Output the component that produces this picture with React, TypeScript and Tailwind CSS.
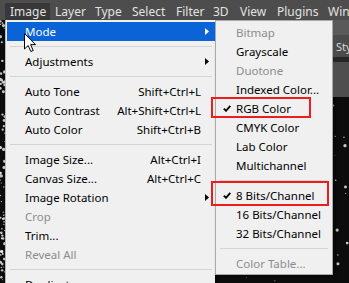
import React from 'react';

const BAR = [
  { label: 'Image', w: 'w-[45px]', active: true },
  { label: 'Layer', w: 'w-[40px]' },
  { label: 'Type', w: 'w-[37px]' },
  { label: 'Select', w: 'w-[44px]' },
  { label: 'Filter', w: 'w-[37px]' },
  { label: '3D', w: 'w-[27px]' },
  { label: 'View', w: 'w-[37px]' },
  { label: 'Plugins', w: 'w-[51px]' },
  { label: 'Window', w: 'w-[50px]' },
];

type Item =
  | { sep: true }
  | { sep?: false; label: string; shortcut?: string; sub?: boolean; off?: boolean; hot?: boolean; check?: boolean };

const MAIN: Item[] = [
  { label: 'Mode', sub: true, hot: true },
  { sep: true },
  { label: 'Adjustments', sub: true },
  { sep: true },
  { label: 'Auto Tone', shortcut: 'Shift+Ctrl+L' },
  { label: 'Auto Contrast', shortcut: 'Alt+Shift+Ctrl+L' },
  { label: 'Auto Color', shortcut: 'Shift+Ctrl+B' },
  { sep: true },
  { label: 'Image Size...', shortcut: 'Alt+Ctrl+I' },
  { label: 'Canvas Size...', shortcut: 'Alt+Ctrl+C' },
  { label: 'Image Rotation', sub: true },
  { label: 'Crop', off: true },
  { label: 'Trim...' },
  { label: 'Reveal All', off: true },
  { sep: true },
  { label: 'Duplicate...' },
];

const MODE: Item[] = [
  { label: 'Bitmap', off: true },
  { label: 'Grayscale' },
  { label: 'Duotone', off: true },
  { label: 'Indexed Color...' },
  { label: 'RGB Color', check: true },
  { label: 'CMYK Color' },
  { label: 'Lab Color' },
  { label: 'Multichannel' },
  { sep: true },
  { label: '8 Bits/Channel', check: true },
  { label: '16 Bits/Channel' },
  { label: '32 Bits/Channel' },
  { sep: true },
  { label: 'Color Table...', off: true },
];

function Arrow({ white }: { white?: boolean }) {
  return (
    <svg width="4" height="7" viewBox="0 0 4 7" className="shrink-0">
      <path d="M0 0 L4 3.5 L0 7 Z" fill={white ? '#ffffff' : '#000000'} />
    </svg>
  );
}

function Check() {
  return (
    <svg width="8" height="7" viewBox="0 0 8 7" className="absolute left-[6px] top-[6px]">
      <path d="M0.8 3.6 L3 5.8 L7.3 0.9" fill="none" stroke="#000" strokeWidth="1.8" />
    </svg>
  );
}

function Speckles() {
  const dots: { x: number; y: number; r: number }[] = [];
  let s = 7;
  const rnd = () => {
    s = (s * 9301 + 49297) % 233280;
    return s / 233280;
  };
  for (let i = 0; i < 260; i++) {
    dots.push({ x: rnd() * 349, y: 20 + rnd() * 263, r: 0.4 + rnd() * 1.3 });
  }
  // a few denser streaks down the left edge
  for (let i = 0; i < 60; i++) {
    dots.push({ x: rnd() * 5, y: 20 + rnd() * 263, r: 0.5 + rnd() * 1.2 });
  }
  return (
    <svg className="absolute inset-0" width="349" height="283">
      {dots.map((d, i) => (
        <circle key={i} cx={d.x} cy={d.y} r={d.r} fill="#e8e8e8" opacity={0.85} />
      ))}
    </svg>
  );
}

function Row({ it, sub }: { it: Item; sub?: boolean }) {
  if (it.sep) {
    return (
      <div className="h-[11px] flex items-center px-[3px]">
        <div className="h-px w-full bg-[#d4d4d4]" />
      </div>
    );
  }
  return (
    <div
      className={`relative h-[19px] flex items-center ${sub ? 'pl-[19px] pr-[10px]' : 'pl-[18px] pr-[5px]'} ${
        it.hot ? 'bg-[#0a64d8] text-white' : it.off ? 'text-[#8c8c8c]' : 'text-black'
      }`}
    >
      {it.check && <Check />}
      <span className="flex-1 whitespace-nowrap">{it.label}</span>
      {it.shortcut && <span className="whitespace-nowrap pr-[9px]">{it.shortcut}</span>}
      {it.sub && (
        <span className="pr-[1px]">
          <Arrow white={it.hot} />
        </span>
      )}
    </div>
  );
}

export default function App() {
  return (
    <div
      className="relative w-[349px] h-[283px] overflow-hidden bg-[#0c0c0c] text-[11.5px] leading-none"
      style={{ fontFamily: '"Noto Sans", "Open Sans", sans-serif' }}
    >
      <Speckles />

      {/* menu bar */}
      <div className="relative flex h-[20px] bg-[#4d4d4d] pl-[5px] pt-[3px] text-[#e2e2e2] text-[12px]">
        {BAR.map((b) => (
          <div
            key={b.label}
            className={`${b.w} shrink-0 pl-[5px] flex items-center ${b.active ? 'bg-[#383838]' : ''}`}
          >
            {b.label}
          </div>
        ))}
      </div>

      <div className="relative flex items-start">
        {/* left strip */}
        <div className="w-[5px] h-[263px] shrink-0" />

        {/* Image menu */}
        <div className="w-[210px] shrink-0 h-[270px] bg-[#f0f0f0] border-l border-[#b8b8b8] pl-px pt-[2px] shadow-[2px_2px_3px_rgba(0,0,0,0.4)]">
          {MAIN.map((it, i) => (
            <Row key={i} it={it} />
          ))}
        </div>

        {/* Mode submenu */}
        <div className="w-[118px] shrink-0 bg-[#f0f0f0] border border-[#a8a8a8] pt-[2px] pb-[1px] px-px shadow-[2px_2px_3px_rgba(0,0,0,0.45)]">
          {MODE.map((it, i) => (
            <Row key={i} it={it} sub />
          ))}
        </div>

        {/* right panel strip */}
        <div className="flex-1 flex flex-col">
          <div className="h-[15px] bg-[#5a5a5a]" />
          <div className="h-[22px] bg-[#4b4b4b] pl-[3px] flex items-center text-[11px] text-[#d8d8d8] overflow-hidden whitespace-nowrap">
            Styles
          </div>
          <div className="h-[5px] bg-[#262626]" />
          <div className="h-[35px] bg-[#4e4e4e]" />
        </div>
      </div>

      {/* annotations */}
      <div className="absolute left-[211px] top-[97px] w-[100px] h-[21px] border-2 border-[#ee1c1c]" />
      <div className="absolute left-[211px] top-[181px] w-[118px] h-[25px] border-2 border-[#ee1c1c]" />

      {/* cursor */}
      <svg className="absolute left-[24px] top-[33px]" width="13" height="20" viewBox="0 0 13 20">
        <path d="M0.5 0.5 L0.5 16 L4.2 12.5 L6.8 18.5 L9.2 17.5 L6.6 11.6 L11.5 11.6 Z" fill="#fff" stroke="#000" strokeWidth="1" />
      </svg>
    </div>
  );
}
